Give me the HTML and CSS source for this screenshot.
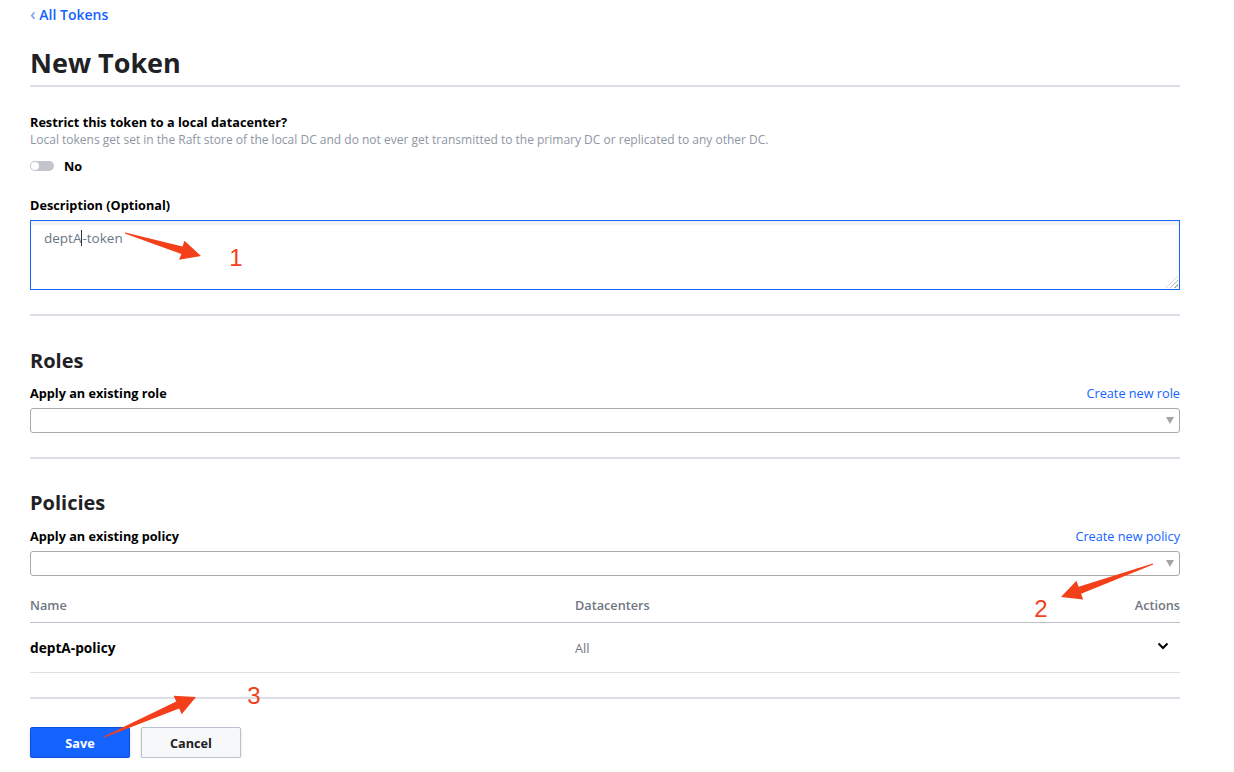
FILE: index.html
```html
<!DOCTYPE html>
<html lang="en">
<head>
    <meta charset="UTF-8">
    <meta name="viewport" content="width=device-width, initial-scale=1.0">
    <title>New Token</title>
    <link rel="stylesheet" href="styles.css">
</head>
<body>
    <div class="page">
        <nav class="crumb"><a href="#"><span class="crumb-arrow">&lsaquo;</span> All Tokens</a></nav>
        <h1 class="title">New Token</h1>

        <form class="token-form">
            <div class="field">
                <div class="label">Restrict this token to a local datacenter?</div>
                <div class="help">Local tokens get set in the Raft store of the local DC and do not ever get transmitted to the primary DC or replicated to any other DC.</div>
                <div class="toggle-row">
                    <span class="toggle"><span class="knob"></span></span>
                    <span class="toggle-label">No</span>
                </div>
            </div>

            <div class="field field-desc">
                <div class="label">Description (Optional)</div>
                <div class="textarea">deptA<span class="caret"></span>-token</div>
            </div>

            <hr class="divider">

            <section class="group group-roles">
                <h2>Roles</h2>
                <div class="label-row">
                    <span class="label">Apply an existing role</span>
                    <a href="#" class="link">Create new role</a>
                </div>
                <div class="select"><span class="select-arrow"></span></div>
            </section>

            <hr class="divider">

            <section class="group">
                <h2>Policies</h2>
                <div class="label-row">
                    <span class="label">Apply an existing policy</span>
                    <a href="#" class="link">Create new policy</a>
                </div>
                <div class="select"><span class="select-arrow"></span></div>

                <table class="policies">
                    <thead>
                        <tr>
                            <th class="col-name">Name</th>
                            <th>Datacenters</th>
                            <th class="col-actions">Actions</th>
                        </tr>
                    </thead>
                    <tbody>
                        <tr>
                            <td class="policy-name">deptA-policy</td>
                            <td class="dc">All</td>
                            <td class="col-actions">
                                <svg width="12" height="8" viewBox="0 0 12 8"><polyline points="1.5,1.5 6,6 10.5,1.5" fill="none" stroke="#000" stroke-width="2"/></svg>
                            </td>
                        </tr>
                    </tbody>
                </table>
            </section>

            <hr class="divider divider-end">

            <div class="actions">
                <button type="button" class="btn btn-primary">Save</button>
                <button type="button" class="btn btn-secondary">Cancel</button>
            </div>
        </form>

        <!-- annotation marks drawn over the screenshot -->
        <svg class="marks" width="1234" height="772" viewBox="0 0 1234 772">
            <g fill="#f4401a">
                <polygon points="125.2,232.5 182.5,246.4 184.5,240.8 201,256 179,259.8 181.4,254.1 124.8,233.5"/>
                <polygon points="1152.8,563.5 1078.6,586.8 1076.4,580.8 1061,597 1083.2,599.6 1081.1,593.7 1153.2,564.5"/>
                <polygon points="104.2,737.5 179.2,708.6 181.7,714.2 196,697 173.7,695.8 176.2,701.4 103.8,736.5"/>
            </g>
            <g class="mark-num" fill="#f4401a">
                <text x="236" y="266">1</text>
                <text x="1041" y="617">2</text>
                <text x="254" y="704">3</text>
            </g>
        </svg>
    </div>
</body>
</html>
```

FILE: styles.css
```css
body {
    margin: 0;
    font-family: "Open Sans", "Noto Sans", sans-serif;
    color: #1f2124;
    background: #fff;
}
.page {
    position: relative;
    width: 1150px;
    padding: 5px 30px 0;
}
.crumb {
    height: 20px;
    line-height: 20px;
    font-size: 14px;
}
.crumb a {
    color: #1563ff;
    text-decoration: none;
    font-weight: 600;
}
.crumb-arrow {
    font-weight: 600;
    font-size: 17px;
    line-height: 1;
    color: #7f9fe8;
}
.title {
    margin: 20px 0 0;
    font-size: 27px;
    line-height: 36px;
    font-weight: 700;
    padding-bottom: 4px;
    border-bottom: 2px solid #dce0e6;
}

.field {
    margin-top: 26px;
}
.field-desc {
    margin-top: 21px;
}
.label {
    font-size: 12.7px;
    line-height: 18px;
    font-weight: 700;
    color: #000;
}
.help {
    font-size: 12px;
    line-height: 18px;
    color: #8e96a3;
}
.toggle-row {
    margin-top: 8px;
    display: flex;
    align-items: center;
    height: 18px;
}
.toggle {
    width: 24px;
    height: 10px;
    border-radius: 5px;
    background: #c2c5cb;
    display: flex;
    align-items: center;
    padding: 0 1px;
    box-sizing: border-box;
}
.knob {
    width: 8px;
    height: 8px;
    border-radius: 50%;
    background: #fff;
}
.toggle-label {
    margin-left: 10px;
    font-size: 12.7px;
    font-weight: 700;
    color: #000;
}
.textarea {
    margin-top: 6px;
    height: 70px;
    box-sizing: border-box;
    border: 1px solid #1563ff;
    box-shadow: inset 0 4px 1px #f1f2f3;
    padding: 8px 13px;
    font-size: 13.5px;
    line-height: 18px;
    color: #6a7786;
    position: relative;
}
.textarea::after {
    content: "";
    position: absolute;
    right: 1px;
    bottom: 1px;
    width: 12px;
    height: 12px;
    background: repeating-linear-gradient(135deg, transparent 0 2px, #b0b0b0 2px 3px);
    clip-path: polygon(100% 0, 100% 100%, 0 100%);
}
.caret {
    display: inline-block;
    width: 1px;
    height: 16px;
    background: #333;
    vertical-align: -3px;
}

.divider {
    margin: 24px 0 0;
    border: 0;
    border-top: 2px solid #dce0e6;
}
.divider-end {
    margin-top: 24px;
}

.group h2 {
    margin: 30px 0 0;
    font-size: 20px;
    line-height: 28px;
    font-weight: 700;
}
.group-roles h2 {
    margin-top: 31px;
}
.label-row {
    margin-top: 10px;
    display: flex;
    justify-content: space-between;
    align-items: center;
}
.group-roles .label-row {
    margin-top: 9px;
}
.link {
    color: #1563ff;
    text-decoration: none;
    font-size: 12.7px;
    line-height: 18px;
}
.select {
    margin-top: 6px;
    height: 25px;
    box-sizing: border-box;
    border: 1px solid #aaaaaa;
    border-radius: 3px;
    display: flex;
    justify-content: flex-end;
    align-items: center;
    padding-right: 5px;
}
.select-arrow {
    width: 0;
    height: 0;
    border-left: 4px solid transparent;
    border-right: 4px solid transparent;
    border-top: 7px solid #a4a4a4;
}

.policies {
    margin-top: 12px;
    width: 100%;
    border-collapse: collapse;
    font-size: 12.7px;
}
.policies th {
    text-align: left;
    font-weight: 600;
    color: #6f7682;
    padding: 8px 0;
    line-height: 18px;
    border-bottom: 1px solid #bac1cc;
}
.policies td {
    height: 49px;
    padding: 0;
    border-bottom: 1px solid #dce0e6;
}
.col-name {
    width: 545px;
}
.policies .col-actions {
    text-align: right;
    width: 120px;
}
.policies td.col-actions svg {
    margin-right: 11px;
    vertical-align: 3px;
}
.policy-name {
    font-size: 13.7px;
    font-weight: 700;
    color: #000;
}
.dc {
    color: #6f7682;
    padding-top: 2px;
}

.actions {
    margin-top: 28px;
    display: flex;
    gap: 11px;
}
.btn {
    width: 100px;
    height: 31px;
    border-radius: 2px;
    font-family: inherit;
    font-size: 12.7px;
    font-weight: 700;
    box-shadow: 0 2px 3px rgba(0, 0, 0, 0.15);
}
.btn-primary {
    background: #1563ff;
    color: #fff;
    border: 1px solid #0c4fd8;
}
.btn-secondary {
    background: #f7f8fa;
    color: #1f2124;
    border: 1px solid #bac1cc;
}

.marks {
    position: absolute;
    left: 0;
    top: 0;
    pointer-events: none;
}
.mark-num text {
    font-family: "Liberation Sans", sans-serif;
    font-size: 24px;
    font-weight: 400;
    text-anchor: middle;
}
```
